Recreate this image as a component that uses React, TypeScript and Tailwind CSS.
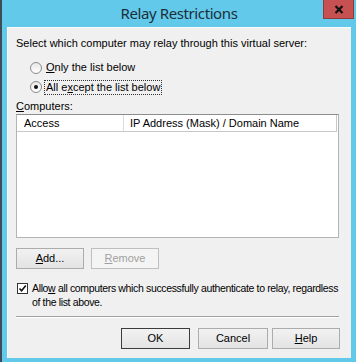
import React from "react"

const Btn = ({
  children,
  def,
  disabled,
  className = "",
}: {
  children: React.ReactNode
  def?: boolean
  disabled?: boolean
  className?: string
}) => (
  <button
    className={
      "h-[21px] flex items-center justify-center text-[11px] bg-gradient-to-b from-[#f2f2f2] to-[#e3e3e3] border " +
      (def ? "border-[#3c3c3c] " : "border-[#acacac] ") +
      (disabled ? "text-[#a0a0a0] bg-none bg-[#f4f4f4] border-[#bfbfbf] " : "text-black ") +
      className
    }
  >
    {children}
  </button>
)

export default function App() {
  return (
    <div className="w-[356px] h-[362px] bg-[#63c9ea] border-l-2 border-[#3d4d58] flex flex-col font-['Liberation_Sans',Arial,sans-serif] text-[11px] text-black leading-[13px]">
      {/* title bar */}
      <div className="h-[27px] grid grid-cols-[1fr_auto_1fr] shrink-0">
        <div />
        <div className="pt-[4px] text-[15px] leading-[18px] text-[#1b2f3a] font-['Noto_Sans',sans-serif] tracking-[-0.4px]">
          Relay Restrictions
        </div>
        <div className="flex justify-end pr-[2px]">
          <div className="w-[31px] h-[19px] bg-[#c75050] border border-[#8f3b3b] border-t-0 flex items-center justify-center">
            <svg width="10" height="9" viewBox="0 0 10 9">
              <path d="M1.5 1 L8.5 8 M8.5 1 L1.5 8" stroke="#111" strokeWidth="2.2" />
            </svg>
          </div>
        </div>
      </div>

      {/* content */}
      <div className="ml-[5px] mr-[5px] h-[331px] bg-[#f0f0f0] border-l border-t border-[#fbfbfb] pl-[8px] pr-[10px] flex flex-col">
        <div className="mt-[9px]">Select which computer may relay through this virtual server:</div>

        <div className="mt-[11px] ml-[14px] flex items-center h-[13px]">
          <span className="w-[12px] h-[12px] rounded-full border border-[#8a8a8a] bg-gradient-to-b from-[#e8e8e8] to-white" />
          <span className="ml-[4px]">
            <u>O</u>nly the list below
          </span>
        </div>

        <div className="mt-[6px] ml-[14px] flex items-center h-[14px]">
          <span className="w-[12px] h-[12px] rounded-full border border-[#8a8a8a] bg-gradient-to-b from-[#e8e8e8] to-white flex items-center justify-center">
            <span className="w-[4px] h-[4px] rounded-full bg-[#111]" />
          </span>
          <span className="ml-[2px] px-[1px] border border-dotted border-[#333]">
            All e<u>x</u>cept the list below
          </span>
        </div>

        <div className="mt-[6px]">
          <u>C</u>omputers:
        </div>

        <div className="mt-[1px] w-[323px] h-[124px] bg-white border border-[#b4b4b4] border-t-[#8c8c8c] flex flex-col shrink-0">
          <div className="h-[17px] flex border-b border-[#c8c8c8] border-r border-r-[#c8c8c8] mr-[1px]">
            <div className="w-[107px] pl-[7px] flex items-center border-r border-[#dcdcdc]">Access</div>
            <div className="pl-[6px] flex items-center">IP Address (Mask) / Domain Name</div>
          </div>
        </div>

        <div className="mt-[10px] flex gap-[7px]">
          <Btn className="w-[68px]">
            <span>
              <u>A</u>dd...
            </span>
          </Btn>
          <Btn disabled className="w-[68px]">
            <span>
              <u>R</u>emove
            </span>
          </Btn>
        </div>

        <div className="mt-[12px] flex items-start">
          <span className="mt-[2px] ml-[1px] w-[11px] h-[11px] border border-[#333] bg-white flex items-center justify-center shrink-0">
            <svg width="9" height="9" viewBox="0 0 9 9">
              <path d="M1.5 4.5 L3.6 6.8 L7.8 1.6" stroke="#111" strokeWidth="1.6" fill="none" />
            </svg>
          </span>
          <span className="ml-[4px] text-[10.5px] leading-[14px] tracking-[-0.35px] whitespace-nowrap">
            Allo<u>w</u> all computers which successfully authenticate to relay, regardless
            <br />
            of the list above.
          </span>
        </div>

        <div className="mt-[7px] w-[323px] h-[2px] border-t border-[#a0a0a0] border-b border-b-white shrink-0" />

        <div className="mt-[10px] flex justify-end pr-[1px]">
          <Btn def className="w-[69px]">OK</Btn>
          <Btn className="w-[70px] ml-[8px]">Cancel</Btn>
          <Btn className="w-[68px] ml-[4px]">
            <span>
              <u>H</u>elp
            </span>
          </Btn>
        </div>
      </div>
    </div>
  )
}
